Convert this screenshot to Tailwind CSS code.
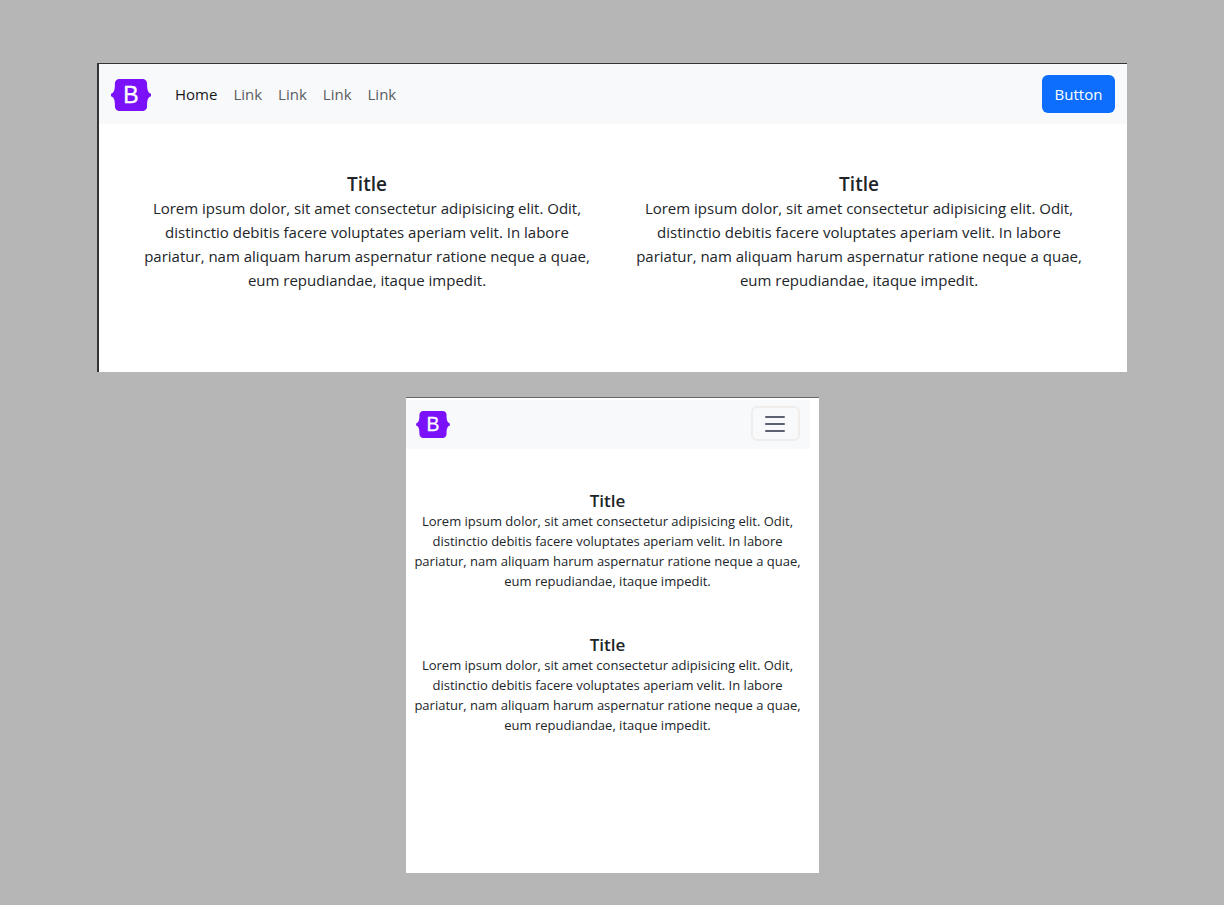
<!DOCTYPE html>
<html lang="en">
<head>
<meta charset="utf-8">
<meta name="viewport" content="width=device-width, initial-scale=1">
<title>Responsive layout</title>
<script src="https://cdn.jsdelivr.net/npm/@tailwindcss/browser@4"></script>
</head>
<body class="min-h-screen bg-[#b6b6b6] px-[97px] pt-[63px] pb-8 font-['Segoe_UI','Open_Sans',sans-serif] text-[15px] leading-6 text-[#212529]">
<section class="min-h-[309px] border-t border-l-2 border-[#333] bg-white">
  <nav class="flex h-[60px] items-center justify-between bg-[#f8f9fa] px-3">
    <div class="flex items-center gap-6">
      <a href="#" aria-label="Bootstrap" class="pt-0.5">
        <svg class="block h-8 w-10" viewBox="0 0 40 32"><path fill="#7a11f8" d="M8.500 0h23c2.800 0 4.700 2.300 4.600 5-.1 4.600.5 8.700 3.900 9.700v2.600c-3.400 1-4 5.100-3.900 9.700.1 2.700-1.800 5-4.600 5h-23c-2.800 0-4.700-2.300-4.600-5C4 22.400 3.400 18.300 0 17.300v-2.600c3.400-1 4-5.100 3.900-9.700C3.800 2.300 5.700 0 8.500 0z"/><text x="20" y="24" text-anchor="middle" font-family="Liberation Sans, sans-serif" font-size="23" fill="#fff" stroke="#fff" stroke-width=".3">B</text></svg>
      </a>
      <div class="flex gap-4 text-[#595d60]">
        <a href="#" class="text-[#16181b]">Home</a>
        <a href="#">Link</a>
        <a href="#">Link</a>
        <a href="#">Link</a>
        <a href="#">Link</a>
      </div>
    </div>
    <button type="button" class="h-[38px] min-w-[73px] rounded-md bg-[#0d6efd] px-3 text-white">Button</button>
  </nav>
  <main class="grid grid-cols-2 gap-8 px-[38px] pt-12 text-center">
    <article>
      <h2 class="text-[19px] leading-6 font-semibold">Title</h2>
      <p>Lorem ipsum dolor, sit amet consectetur adipisicing elit. Odit, distinctio debitis facere voluptates aperiam velit. In labore pariatur, nam aliquam harum aspernatur ratione neque a quae, eum repudiandae, itaque impedit.</p>
    </article>
    <article>
      <h2 class="text-[19px] leading-6 font-semibold">Title</h2>
      <p>Lorem ipsum dolor, sit amet consectetur adipisicing elit. Odit, distinctio debitis facere voluptates aperiam velit. In labore pariatur, nam aliquam harum aspernatur ratione neque a quae, eum repudiandae, itaque impedit.</p>
    </article>
  </main>
</section>
<section class="mx-auto mt-[25px] min-h-[476px] max-w-[413px] border-t border-[#666] bg-white pt-0.5 pr-[9px] text-[13px] leading-5">
  <nav class="flex h-[49px] items-center justify-between bg-[#f8f9fa] px-2.5">
    <a href="#" aria-label="Bootstrap">
      <svg class="h-[27px] w-[34px]" viewBox="0 0 40 32"><path fill="#7a11f8" d="M8.500 0h23c2.800 0 4.700 2.300 4.600 5-.1 4.600.5 8.700 3.900 9.700v2.600c-3.400 1-4 5.100-3.900 9.700.1 2.700-1.800 5-4.600 5h-23c-2.800 0-4.700-2.300-4.600-5C4 22.400 3.400 18.300 0 17.300v-2.600c3.400-1 4-5.100 3.900-9.700C3.800 2.300 5.700 0 8.500 0z"/><text x="20" y="24" text-anchor="middle" font-family="Liberation Sans, sans-serif" font-size="23" fill="#fff" stroke="#fff" stroke-width=".3">B</text></svg>
    </a>
    <button type="button" aria-label="Toggle navigation" class="mb-0.5 flex h-[35px] w-[49px] items-center justify-center rounded-md border-2 border-[#f0eeed]">
      <svg class="h-[18px] w-[22px]" viewBox="0 0 22 18" fill="none" stroke="#5d6070" stroke-width="2" stroke-linecap="round"><path d="M2 2h18M2 9h18M2 16h18"/></svg>
    </button>
  </nav>
  <main class="flex flex-col gap-11 px-2 pt-[42px] text-center">
    <article>
      <h2 class="text-[17px] leading-5 font-semibold">Title</h2>
      <p>Lorem ipsum dolor, sit amet consectetur adipisicing elit. Odit, distinctio debitis facere voluptates aperiam velit. In labore pariatur, nam aliquam harum aspernatur ratione neque a quae, eum repudiandae, itaque impedit.</p>
    </article>
    <article>
      <h2 class="text-[17px] leading-5 font-semibold">Title</h2>
      <p>Lorem ipsum dolor, sit amet consectetur adipisicing elit. Odit, distinctio debitis facere voluptates aperiam velit. In labore pariatur, nam aliquam harum aspernatur ratione neque a quae, eum repudiandae, itaque impedit.</p>
    </article>
  </main>
</section>
</body>
</html>
